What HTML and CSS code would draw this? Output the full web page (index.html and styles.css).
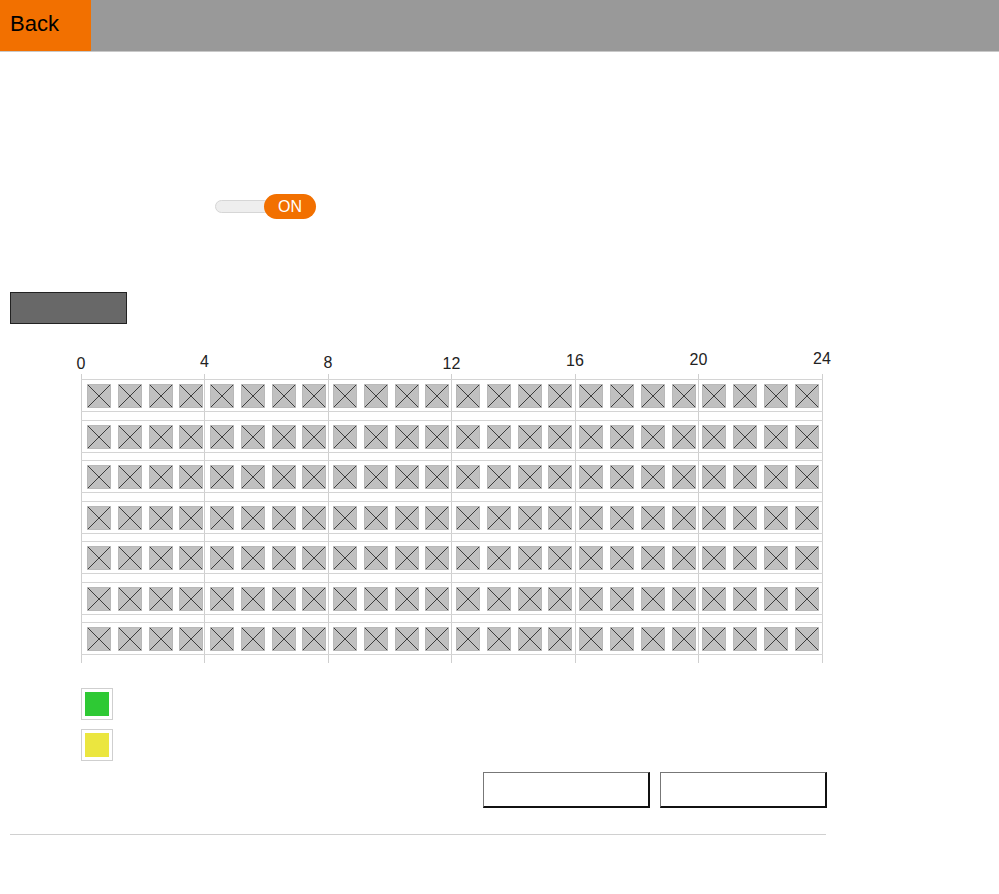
FILE: index.html
```html
<!DOCTYPE html>
<html>
<head>
<meta charset="utf-8">
<title>Schedule</title>
<link rel="stylesheet" href="styles.css">
</head>
<body>
<header class="topbar">
  <a class="back">Back</a>
  <div class="bar-fill"></div>
</header>
<main class="content">
  <div class="toggle-row">
    <div class="toggle"><span class="track"></span><span class="pill">ON</span></div>
  </div>
  <button class="dark-btn" type="button"></button>
  <section class="schedule">
    <div class="hours">
      <span class="h"><b>0</b></span><span class="h"><b>4</b></span><span class="h"><b>8</b></span><span class="h"><b>12</b></span><span class="h"><b>16</b></span><span class="h"><b>20</b></span><span class="h"><b>24</b></span>
    </div>
    <div class="grid">
      <div class="row"><i></i><i></i><i></i><i></i><i></i><i></i><i></i><i></i><i></i><i></i><i></i><i></i><i></i><i></i><i></i><i></i><i></i><i></i><i></i><i></i><i></i><i></i><i></i><i></i></div>
      <div class="row"><i></i><i></i><i></i><i></i><i></i><i></i><i></i><i></i><i></i><i></i><i></i><i></i><i></i><i></i><i></i><i></i><i></i><i></i><i></i><i></i><i></i><i></i><i></i><i></i></div>
      <div class="row"><i></i><i></i><i></i><i></i><i></i><i></i><i></i><i></i><i></i><i></i><i></i><i></i><i></i><i></i><i></i><i></i><i></i><i></i><i></i><i></i><i></i><i></i><i></i><i></i></div>
      <div class="row"><i></i><i></i><i></i><i></i><i></i><i></i><i></i><i></i><i></i><i></i><i></i><i></i><i></i><i></i><i></i><i></i><i></i><i></i><i></i><i></i><i></i><i></i><i></i><i></i></div>
      <div class="row"><i></i><i></i><i></i><i></i><i></i><i></i><i></i><i></i><i></i><i></i><i></i><i></i><i></i><i></i><i></i><i></i><i></i><i></i><i></i><i></i><i></i><i></i><i></i><i></i></div>
      <div class="row"><i></i><i></i><i></i><i></i><i></i><i></i><i></i><i></i><i></i><i></i><i></i><i></i><i></i><i></i><i></i><i></i><i></i><i></i><i></i><i></i><i></i><i></i><i></i><i></i></div>
      <div class="row"><i></i><i></i><i></i><i></i><i></i><i></i><i></i><i></i><i></i><i></i><i></i><i></i><i></i><i></i><i></i><i></i><i></i><i></i><i></i><i></i><i></i><i></i><i></i><i></i></div>
    </div>
  </section>
  <div class="legend">
    <div class="swatch"><span class="green"></span></div>
    <div class="swatch"><span class="yellow"></span></div>
  </div>
  <div class="actions">
    <button class="outline-btn" type="button"></button>
    <button class="outline-btn" type="button"></button>
  </div>
  <hr class="divider">
</main>
</body>
</html>
```
FILE: styles.css
```css
* { box-sizing: border-box; }
html, body { margin: 0; padding: 0; background: #fff; }
body { font-family: "Liberation Sans", Arial, sans-serif; color: #222; }

.topbar {
  display: flex;
  height: 52px;
  background: #999;
  border-bottom: 1px solid #c8c8c8;
}
.back {
  width: 91px;
  background: #f27000;
  color: #000;
  font-size: 22px;
  display: flex;
  align-items: center;
  padding: 0 0 3px 10px;
}
.bar-fill { flex: 1; }

.content {
  width: 817px;
  margin-left: 10px;
}

.toggle-row {
  margin-top: 142px;
  height: 25px;
  padding-left: 205px;
}
.toggle { display: flex; align-items: center; height: 25px; }
.track {
  width: 56px;
  height: 13px;
  background: #eee;
  border: 1px solid #d6d6d6;
  border-radius: 7px;
}
.pill {
  margin-left: -7px;
  width: 52px;
  height: 25px;
  border-radius: 13px;
  background: #f27000;
  color: #fff;
  font-size: 16px;
  display: flex;
  align-items: center;
  justify-content: center;
}

.dark-btn {
  display: block;
  margin: 73px 0 0 0;
  width: 117px;
  height: 32px;
  background: #686868;
  border: 1px solid #222;
  padding: 0;
}

.schedule { margin-left: 71px; margin-top: 28px; }
.hours {
  display: grid;
  grid-template-columns: repeat(6, 123.5px) 0;
  height: 22px;
  font-size: 16px;
  color: #222;
}
.h {
  width: 0;
  display: flex;
  justify-content: center;
  white-space: nowrap;
}
.h b { font-weight: normal; line-height: 18px; }
.h:nth-child(1) b { margin-top: 3px; }
.h:nth-child(2) b { margin-top: 1px; }
.h:nth-child(3) b { margin-top: 2px; }
.h:nth-child(4) b { margin-top: 3px; }
.h:nth-child(5) b { margin-top: 0; }
.h:nth-child(6) b { margin-top: -1px; }
.h:nth-child(7) b { margin-top: -2px; }

.grid {
  width: 742px;
  padding: 5px 0 8px;
  display: flex;
  flex-direction: column;
  gap: 7.5px;
  background: repeating-linear-gradient(to right, #cfcfcf 0 1px, transparent 1px 123.5px);
}
.row {
  height: 33px;
  border-top: 1px solid #d4d4d4;
  border-bottom: 1px solid #d4d4d4;
  padding: 4px 0 3px 6px;
  display: grid;
  grid-template-columns: repeat(24, 30.78px);
}
.row i {
  display: block;
  width: 24px;
  height: 24px;
  border: 1px solid #b8b8b8;
  background:
    linear-gradient(45deg, transparent calc(50% - 0.7px), #3c3c3c calc(50% - 0.7px), #3c3c3c calc(50% + 0.7px), transparent calc(50% + 0.7px)),
    linear-gradient(-45deg, transparent calc(50% - 0.7px), #3c3c3c calc(50% - 0.7px), #3c3c3c calc(50% + 0.7px), transparent calc(50% + 0.7px)),
    #c0c0c0;
}

.legend {
  margin: 25px 0 0 71px;
  display: flex;
  flex-direction: column;
  gap: 9px;
}
.swatch {
  width: 32px;
  height: 32px;
  border: 1px solid #cfcfcf;
  padding: 3px;
}
.swatch span { display: block; width: 24px; height: 24px; }
.green { background: #2ec934; }
.yellow { background: #ebe63f; }

.actions {
  margin-top: 11px;
  display: flex;
  justify-content: flex-end;
  gap: 10px;
}
.outline-btn {
  width: 167px;
  height: 36px;
  background: #fff;
  padding: 0;
  border-style: solid;
  border-width: 1px 2px 2px 1px;
  border-color: #777 #111 #111 #777;
}

.divider {
  margin: 26px 0 0 0;
  width: 816px;
  border: 0;
  border-top: 1px solid #d0d0d0;
  height: 0;
}
```
